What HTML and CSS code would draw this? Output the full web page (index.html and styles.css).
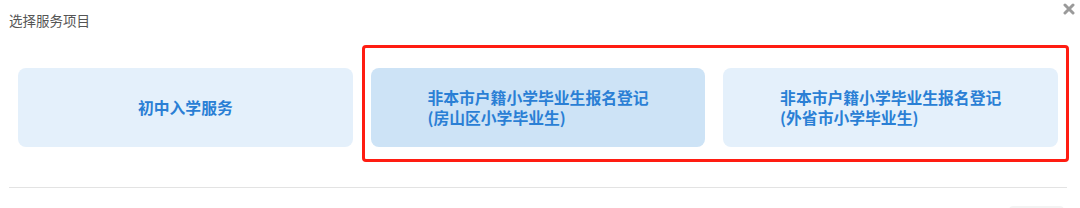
FILE: index.html
```html
<!DOCTYPE html>
<html lang="zh-CN">
<head>
<meta charset="utf-8">
<title>选择服务项目</title>
<link rel="stylesheet" href="styles.css">
</head>
<body>
<div class="dialog">
  <div class="header">
    <span class="title">选择服务项目</span>
    <span class="close" aria-label="关闭">
      <svg width="12" height="12" viewBox="0 0 12 12"><path d="M2 2 L10 10 M10 2 L2 10" stroke="#9a9a9a" stroke-width="3" stroke-linecap="round"/></svg>
    </span>
  </div>
  <div class="cards">
    <div class="card"><div class="card-text">初中入学服务</div></div>
    <div class="card active"><div class="card-text">非本市户籍小学毕业生报名登记<br>(房山区小学毕业生)</div></div>
    <div class="card"><div class="card-text">非本市户籍小学毕业生报名登记<br>(外省市小学毕业生)</div></div>
  </div>
  <div class="divider"></div>
  <div class="footer"><span class="btn"></span></div>
  <div class="highlight"></div>
</div>
</body>
</html>
```
FILE: styles.css
```css
html, body {
  margin: 0;
  padding: 0;
  background: #ffffff;
}
body {
  font-family: "Noto Sans CJK SC", "Noto Sans", sans-serif;
}
.dialog {
  position: relative;
  width: 1080px;
  height: 208px;
  overflow: hidden;
}
.header {
  height: 40px;
  display: flex;
  justify-content: space-between;
  align-items: center;
  padding: 0 5px 0 9px;
}
.title {
  font-size: 13.5px;
  color: #555555;
  line-height: 20px;
}
.close {
  align-self: flex-start;
  margin-top: 3px;
  width: 12px;
  height: 12px;
  display: flex;
}
.cards {
  display: flex;
  gap: 18px;
  padding: 28px 22px 0 18px;
}
.card {
  flex: 1;
  height: 79px;
  border-radius: 8px;
  background: #e4f0fb;
  display: flex;
  align-items: center;
  justify-content: center;
}
.card.active {
  background: #cde3f6;
}
.card-text {
  font-size: 15.8px;
  line-height: 20px;
  font-weight: 700;
  color: #2a7fd5;
  text-align: left;
}
.divider {
  margin: 40px 13px 0 9px;
  height: 1px;
  background: #e3e3e3;
}
.footer {
  display: flex;
  justify-content: flex-end;
  padding: 18px 16px 0 0;
}
.btn {
  width: 55px;
  height: 30px;
  border-radius: 4px;
  background: #f3f3f3;
}
.highlight {
  position: absolute;
  left: 362px;
  top: 45px;
  width: 701px;
  height: 111px;
  border: 3px solid #ff1d12;
  border-radius: 4px;
  pointer-events: none;
}
```
